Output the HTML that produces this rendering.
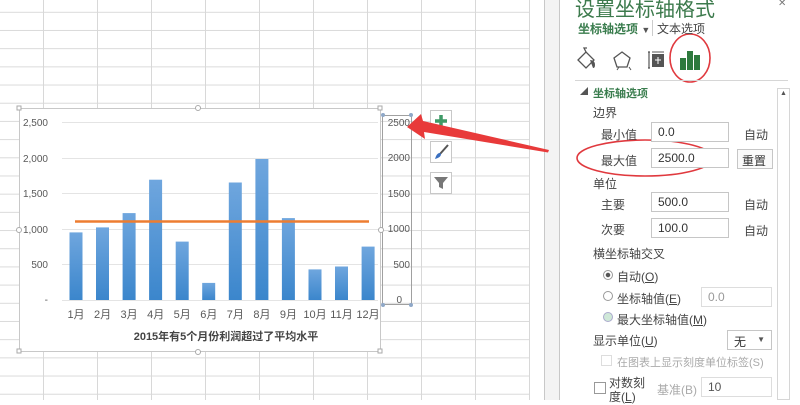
<!DOCTYPE html>
<html><head><meta charset="utf-8"><style>
*{margin:0;padding:0;box-sizing:border-box}
body{width:800px;height:400px;overflow:hidden;position:relative;background:#fff;font-family:"Liberation Sans","Microsoft YaHei","Noto Sans CJK SC",sans-serif;color:#444}
.a{position:absolute}
#grid{left:0;top:0;width:545px;height:400px;background:
repeating-linear-gradient(90deg,transparent 0 43px,#d8d8d8 43px 44px,transparent 44px 54px) -0px 0/54px 100%,
repeating-linear-gradient(180deg,transparent 0 11.6px,#dadada 11.6px 12.6px,transparent 12.6px 18.2px) 0 0/100% 18.2px;}
.t{font-size:12px;white-space:nowrap}
.inp{position:absolute;border:1px solid #c6c6c6;background:#fff;height:20px;font-size:12px;padding:2px 6px;color:#333}
.btn{position:absolute;width:22px;height:22px;border:1px solid #c8c8c8;background:#fff}
</style></head><body>
<div id="grid" class="a"></div>
<div class="a" style="left:529px;top:0;width:15px;height:400px;background:#fff;border-left:1px solid #d8d8d8"></div>
<div class="a" style="left:544px;top:0;width:16px;height:400px;background:#f3f3f3;border-left:1px solid #c8c8c8;border-right:1px solid #c8c8c8"></div>
<div class="a" style="left:560px;top:0;width:240px;height:400px;background:#fff"></div>

<!-- chart -->
<div class="a" style="left:19px;top:108px;width:362px;height:244px;background:#fff;border:1px solid #c8c8c8"></div>
<svg class="a" style="left:0;top:0" width="545" height="400">
<defs><linearGradient id="g" x1="0" y1="0" x2="0" y2="1"><stop offset="0" stop-color="#6fa6de"/><stop offset="1" stop-color="#3b86cc"/></linearGradient></defs>
<g stroke="#e4e4e4" stroke-width="1">
<line x1="62" x2="378" y1="122.5" y2="122.5"/><line x1="62" x2="378" y1="158.5" y2="158.5"/><line x1="62" x2="378" y1="193.5" y2="193.5"/><line x1="62" x2="378" y1="229.5" y2="229.5"/><line x1="62" x2="378" y1="264.5" y2="264.5"/><line x1="62" x2="378" y1="300.5" y2="300.5"/>
</g>
<g font-size="10" fill="#595959" text-anchor="end" font-family="Liberation Sans,sans-serif">
<text x="48" y="126">2,500</text><text x="48" y="162">2,000</text><text x="48" y="197">1,500</text><text x="48" y="233">1,000</text><text x="48" y="268">500</text><text x="48" y="303">-</text>
</g>
<g fill="url(#g)">
<rect x="69.5" y="232.4" width="13" height="67.6"/>
<rect x="96" y="227.4" width="13" height="72.6"/>
<rect x="122.6" y="213.1" width="13" height="86.9"/>
<rect x="149.1" y="179.7" width="13" height="120.3"/>
<rect x="175.7" y="241.6" width="13" height="58.4"/>
<rect x="202.2" y="282.9" width="13" height="17.1"/>
<rect x="228.8" y="182.5" width="13" height="117.5"/>
<rect x="255.4" y="159" width="13" height="141"/>
<rect x="281.9" y="218.1" width="13" height="81.9"/>
<rect x="308.5" y="269.4" width="13" height="30.6"/>
<rect x="335" y="266.5" width="13" height="33.5"/>
<rect x="361.6" y="246.6" width="13" height="53.4"/>
</g>
<line x1="75" y1="221.5" x2="369" y2="221.5" stroke="#ed7d31" stroke-width="2.5"/>
<g font-size="11" fill="#595959" text-anchor="middle" font-family="Liberation Sans,Noto Sans CJK SC,sans-serif">
<text x="76" y="318">1月</text><text x="102.6" y="318">2月</text><text x="129.1" y="318">3月</text><text x="155.7" y="318">4月</text><text x="182.2" y="318">5月</text><text x="208.8" y="318">6月</text><text x="235.3" y="318">7月</text><text x="261.9" y="318">8月</text><text x="288.4" y="318">9月</text><text x="315" y="318">10月</text><text x="341.5" y="318">11月</text><text x="368" y="318">12月</text>
</g>
<text x="226" y="340" font-size="11" font-weight="bold" fill="#444" text-anchor="middle" font-family="Liberation Sans,Noto Sans CJK SC,sans-serif">2015年有5个月份利润超过了平均水平</text>
<rect x="382.5" y="115.5" width="29" height="189" fill="none" stroke="#a0a0a0"/>
<g fill="#8fa8c8"><circle cx="383" cy="115" r="2"/><circle cx="411" cy="115" r="2"/><circle cx="383" cy="305" r="2"/><circle cx="411" cy="305" r="2"/></g>
<g font-size="10" fill="#595959" text-anchor="end" font-family="Liberation Sans,sans-serif">
<text x="410" y="126">2500</text><text x="410" y="161">2000</text><text x="410" y="197">1500</text><text x="410" y="232">1000</text><text x="410" y="268">500</text><text x="402" y="303">0</text>
</g>
<g fill="#fff" stroke="#aaa"><rect x="17" y="106" width="4" height="4"/><rect x="378" y="106" width="4" height="4"/><rect x="17" y="349" width="4" height="4"/><rect x="378" y="349" width="4" height="4"/><circle cx="198" cy="108" r="2.5"/><circle cx="198" cy="352" r="2.5"/><circle cx="19" cy="230" r="2.5"/><circle cx="381" cy="230" r="2.5"/></g>
</svg>
<div class="btn" style="left:430px;top:110px"><svg width="20" height="20"><path d="M10 4v12M4 10h12" stroke="#3f9a67" stroke-width="3.5"/></svg></div>
<div class="btn" style="left:430px;top:141px"><svg width="20" height="20"><path d="M17 3L9 12" stroke="#555" stroke-width="2"/><path d="M9 11c-3 0-4 3-5 6 3-1 6-2 6-5z" fill="#3a6fc0"/></svg></div>
<div class="btn" style="left:430px;top:172px"><svg width="20" height="20"><path d="M3 4h14l-5 6v6l-4-2v-4z" fill="#777"/></svg></div>

<!-- arrow -->
<svg class="a" style="left:0;top:0" width="800" height="400">
<path d="M549 150 L423 121 L421 114 L407 127 L425 139 L424 132 L548 152.5 Z" fill="#e83a3a"/>
<ellipse cx="645" cy="158" rx="68" ry="18" fill="none" stroke="#e0393e" stroke-width="1.6"/>
<ellipse cx="690" cy="58" rx="20" ry="24" fill="none" stroke="#e0393e" stroke-width="1.6"/>
</svg>

<!-- panel -->
<div class="a" style="left:575px;top:-7px;font-size:20px;color:#3c7a4c">设置坐标轴格式</div>
<div class="a" style="left:778px;top:-2px;width:12px;height:3px;font-size:10px;color:#777">✕</div>
<div class="a t" style="left:578px;top:20px;color:#3a7d4e;font-weight:bold">坐标轴选项 <span style="color:#555;font-size:9px">▼</span></div>
<div class="a" style="left:652px;top:20px;width:1px;height:16px;background:#ccc"></div>
<div class="a t" style="left:657px;top:20px;color:#444">文本选项</div>
<svg class="a" style="left:570px;top:40px" width="140" height="40">
<path d="M8 20l8-8 8 8-8 8z" fill="none" stroke="#555" stroke-width="1.3"/><path d="M16 12l-2-4h3" fill="none" stroke="#555" stroke-width="1.3"/><path d="M20 20q5 0 5 5q0 3-2 3z" fill="#555"/>
<path d="M52 12l8 6-3 9h-10l-3-9z" fill="none" stroke="#555" stroke-width="1.3"/><path d="M49 27l-2 3M59 27l2 3" stroke="#555"/>
<path d="M78 12h2M79 12v16M78 28h2" stroke="#555" stroke-width="1.2"/><rect x="82" y="14" width="12" height="13" fill="#555"/><path d="M82 12h12" stroke="#555"/><path d="M88 17v7M85 20h6" stroke="#fff"/>
<rect x="110" y="18" width="6" height="12" fill="#2e7a3e"/><rect x="117" y="11" width="6" height="19" fill="#2e7a3e"/><rect x="124" y="15" width="6" height="15" fill="#2e7a3e"/>
</svg>
<div class="a" style="left:575px;top:80px;width:213px;height:1px;background:#d6d6d6"></div>
<div class="a" style="left:777px;top:88px;width:13px;height:312px;border:1px solid #d6d6d6;background:#fff"></div>
<div class="a" style="left:780px;top:90px;font-size:7px;color:#555">▲</div>
<div class="a t" style="left:580px;top:86px;font-size:8px;color:#555">◢</div>
<div class="a t" style="left:593px;top:85px;font-size:11px;color:#3a7d4e;font-weight:bold">坐标轴选项</div>
<div class="a t" style="left:593px;top:104px">边界</div>
<div class="a t" style="left:601px;top:126px">最小值</div>
<div class="inp" style="left:651px;top:122px;width:78px">0.0</div>
<div class="a t" style="left:744px;top:126px">自动</div>
<div class="a t" style="left:601px;top:152px">最大值</div>
<div class="inp" style="left:651px;top:148px;width:78px">2500.0</div>
<div class="inp" style="left:737px;top:149px;width:36px;padding:2px 4px;background:#fafafa">重置</div>
<div class="a t" style="left:593px;top:175px">单位</div>
<div class="a t" style="left:601px;top:196px">主要</div>
<div class="inp" style="left:651px;top:192px;width:78px">500.0</div>
<div class="a t" style="left:744px;top:196px">自动</div>
<div class="a t" style="left:601px;top:221px">次要</div>
<div class="inp" style="left:651px;top:218px;width:78px">100.0</div>
<div class="a t" style="left:744px;top:222px">自动</div>
<div class="a t" style="left:593px;top:245px">横坐标轴交叉</div>
<div class="a" style="left:603px;top:270px;width:10px;height:10px;border:1px solid #999;border-radius:50%;background:radial-gradient(#555 0 2px,#fff 2.5px)"></div>
<div class="a t" style="left:617px;top:268px">自动(<u>O</u>)</div>
<div class="a" style="left:603px;top:291px;width:10px;height:10px;border:1px solid #999;border-radius:50%"></div>
<div class="a t" style="left:617px;top:290px">坐标轴值(<u>E</u>)</div>
<div class="inp" style="left:701px;top:287px;width:71px;color:#999;border-color:#ddd">0.0</div>
<div class="a" style="left:603px;top:312px;width:10px;height:10px;border:1px solid #aac;border-radius:50%;background:#cfe8d8"></div>
<div class="a t" style="left:617px;top:311px">最大坐标轴值(<u>M</u>)</div>
<div class="a t" style="left:593px;top:332px">显示单位(<u>U</u>)</div>
<div class="inp" style="left:727px;top:330px;width:45px">无 <span style="font-size:8px;float:right;color:#555;margin-top:2px">▼</span></div>
<div class="a" style="left:601px;top:355px;width:11px;height:11px;border:1px solid #ddd"></div>
<div class="a t" style="left:617px;top:354px;color:#aaa;font-size:11px">在图表上显示刻度单位标签(S)</div>
<div class="a" style="left:594px;top:382px;width:12px;height:12px;border:1px solid #999"></div>
<div class="a t" style="left:609px;top:374px">对数刻</div>
<div class="a t" style="left:609px;top:388px">度(<u>L</u>)</div>
<div class="a t" style="left:657px;top:381px;color:#aaa">基准(B)</div>
<div class="inp" style="left:701px;top:377px;width:71px;border-color:#ddd;color:#555">10</div>
</body></html>
